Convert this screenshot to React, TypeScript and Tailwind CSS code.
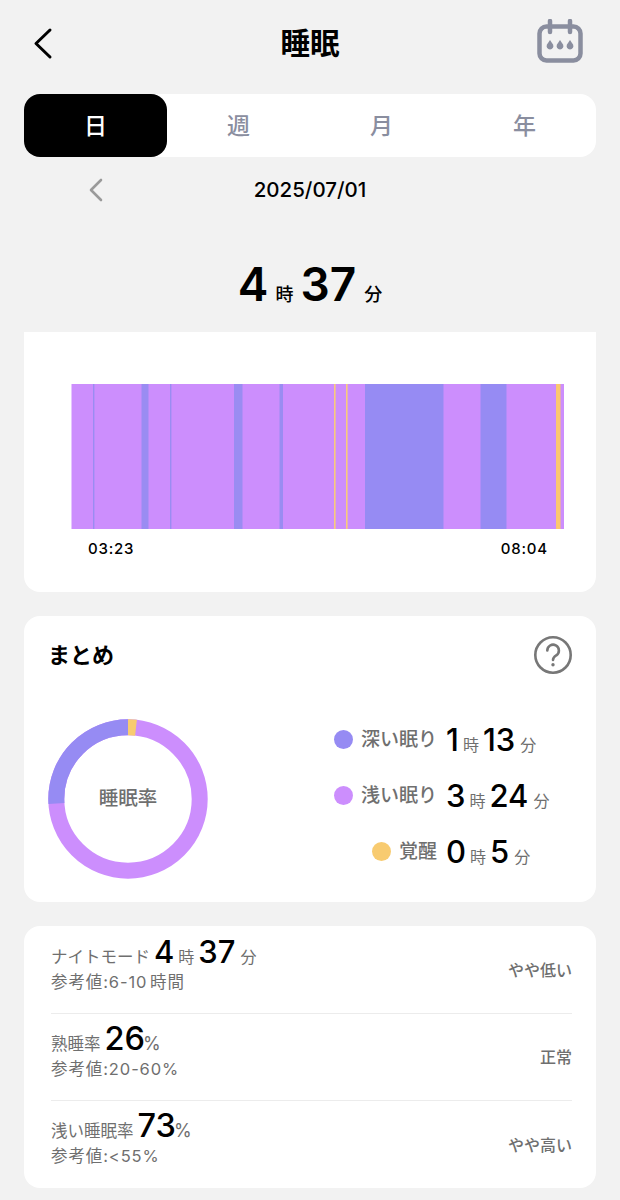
const stages = [
  { x: 93, w: 1.4, color: "#9a8cf2" },
  { x: 141.5, w: 7, color: "#9a8cf2" },
  { x: 170, w: 1.4, color: "#9a8cf2" },
  { x: 234, w: 8.5, color: "#9a8cf2" },
  { x: 279.5, w: 3.5, color: "#9a8cf2" },
  { x: 334, w: 1.6, color: "#f8cb7c" },
  { x: 346, w: 1.6, color: "#f8cb7c" },
  { x: 365, w: 78.5, color: "#968bf3" },
  { x: 480.5, w: 26, color: "#968bf3" },
  { x: 556, w: 4.5, color: "#fbc76f" },
];

const Unit = ({ children, className = "" }: { children: string; className?: string }) => (
  <span className={`text-[16px] font-normal text-[#6f6f6f] ${className}`}>{children}</span>
);

const Duration = ({ h, m }: { h: string; m: string }) => (
  <span className="flex items-baseline text-[31px] leading-none font-medium text-black">
    <span>{h}</span>
    <Unit className="ml-[4px] mr-[4px]">時</Unit>
    <span>{m}</span>
    <Unit className="ml-[5px]">分</Unit>
  </span>
);

const Legend = ({ color, label, h, m }: { color: string; label: string; h: string; m: string }) => (
  <>
    <div className="flex items-center justify-end gap-[8px]">
      <span className="size-[19px] rounded-full" style={{ backgroundColor: color }} />
      <span className="text-[19px] leading-none font-medium text-[#6f6f6f]">{label}</span>
    </div>
    <Duration h={h} m={m} />
  </>
);

const Metric = ({
  label,
  value,
  reference,
  status,
  last,
}: {
  label: string;
  value: React.ReactNode;
  reference: React.ReactNode;
  status: string;
  last?: boolean;
}) => (
  <div className={`flex h-[87px] items-center justify-between ${last ? "" : "border-b border-[#ececec]"}`}>
    <div className="pb-[12px]">
      <div className="flex h-[34px] items-baseline gap-[4px] text-[16.5px] text-[#6f6f6f]">
        <span>{label}</span>
        {value}
      </div>
      <div className="mt-[1px] text-[16.5px] leading-[22px] tracking-[0.9px] text-[#6f6f6f]">{reference}</div>
    </div>
    <span className="text-[16px] font-medium text-[#6f6f6f]">{status}</span>
  </div>
);

const Percent = ({ value }: { value: string }) => (
  <span className="flex items-baseline text-[32.5px] leading-none font-medium text-black">
    {value}
    <span className="-ml-[2px] text-[18px] font-normal text-[#6f6f6f]">%</span>
  </span>
);

export default function App() {
  return (
    <div
      className="h-[1200px] w-[620px] overflow-hidden bg-[#f2f2f2]"
      style={{ fontFamily: 'Inter, "Noto Sans CJK JP", sans-serif' }}
    >
      {/* header */}
      <div className="grid h-[94px] grid-cols-[60px_1fr_60px] items-start px-[24px] pt-[20px]">
        <svg width="40" height="46" viewBox="0 0 40 46" fill="none">
          <path d="M26 10 L12 23.5 L26 37" stroke="#000" strokeWidth="3" strokeLinecap="round" strokeLinejoin="round" />
        </svg>
        <h1 className="pt-[3px] text-center text-[29.5px] leading-[40px] font-bold text-black">睡眠</h1>
        <svg width="50" height="50" viewBox="0 0 50 50" fill="none" className="-ml-[1px] -mt-[1px]">
          <rect x="4.5" y="7.5" width="41" height="34" rx="7" stroke="#8a8e9f" strokeWidth="4.5" />
          <path d="M15 2v11M35 2v11" stroke="#8a8e9f" strokeWidth="4.5" strokeLinecap="round" />
          <path d="M15 21l3 4.5a3.4 3.4 0 1 1-6 0z" fill="#8a8e9f" />
          <path d="M25 21l3 4.5a3.4 3.4 0 1 1-6 0z" fill="#8a8e9f" />
          <path d="M35 21l3 4.5a3.4 3.4 0 1 1-6 0z" fill="#8a8e9f" />
        </svg>
      </div>

      {/* period tabs */}
      <div className="mx-[24px] grid h-[63px] grid-cols-4 rounded-[16px] bg-white text-[23px] font-medium text-[#8a8e9f]">
        <div className="flex items-center justify-center rounded-[16px] bg-black pt-[1px] text-white">日</div>
        <div className="flex items-center justify-center pt-[1px]">週</div>
        <div className="flex items-center justify-center pt-[1px]">月</div>
        <div className="flex items-center justify-center pt-[1px]">年</div>
      </div>

      {/* date */}
      <div className="relative mt-[15px] flex h-[36px] items-center justify-center text-[20.5px] font-medium text-black">
        <svg width="18" height="28" viewBox="0 0 18 28" fill="none" className="absolute left-[87px] top-[4px]">
          <path d="M14 4 L4 14 L14 24" stroke="#9a9a9a" strokeWidth="2.6" strokeLinecap="round" strokeLinejoin="round" />
        </svg>
        2025/07/01
      </div>

      {/* total */}
      <div className="mt-[44px] flex h-[65px] items-baseline justify-center text-[46px] leading-[65px] font-semibold text-black">
        <span>4</span>
        <span className="mx-[7px] text-[18px] font-medium">時</span>
        <span>37</span>
        <span className="ml-[8px] text-[18px] font-medium">分</span>
      </div>

      {/* stage chart */}
      <div className="mx-[24px] mt-[15px] h-[260px] rounded-b-[16px] bg-white pt-[52px]">
        <svg width="572" height="145" viewBox="24 384 572 145" className="block">
          <rect x="71.5" y="384" width="492.5" height="145" fill="#cc8efd" />
          {stages.map((s) => (
            <rect key={s.x} x={s.x} y="384" width={s.w} height="145" fill={s.color} />
          ))}
        </svg>
        <div className="mt-[10px] flex justify-between pl-[64px] pr-[48px] text-[15px] leading-[20px] font-medium tracking-[0.8px] text-black">
          <span>03:23</span>
          <span>08:04</span>
        </div>
      </div>

      {/* summary */}
      <div className="mx-[24px] mt-[24px] h-[286px] rounded-[16px] bg-white px-[24px] pt-[19px]">
        <div className="flex items-center justify-between">
          <h2 className="text-[22px] leading-[40px] font-bold text-black">まとめ</h2>
          <svg width="40" height="40" viewBox="0 0 40 40" fill="none" className="-mr-[1px]">
            <circle cx="20" cy="20" r="17.7" stroke="#777" strokeWidth="2.6" />
            <path
              d="M14.3 15.5a5.8 5.8 0 1 1 9 4.8c-2 1.4-3.3 2.4-3.3 4.6"
              stroke="#777"
              strokeWidth="2.6"
              strokeLinecap="round"
            />
            <circle cx="20" cy="29.7" r="1.7" fill="#777" />
          </svg>
        </div>
        <div className="mt-[44px] flex items-start justify-between">
          <div className="relative size-[160px]">
            <svg width="160" height="160" viewBox="0 0 160 160" className="-rotate-90">
              <circle cx="80" cy="80" r="71.7" fill="none" stroke="#cc8efd" strokeWidth="16" />
              <circle cx="80" cy="80" r="71.7" fill="none" stroke="#968bf3" strokeWidth="16" pathLength={100} strokeDasharray="26 74" strokeDashoffset="-74" />
              <circle cx="80" cy="80" r="71.7" fill="none" stroke="#f8cb70" strokeWidth="16" pathLength={100} strokeDasharray="1.8 98.2" />
            </svg>
            <span className="absolute inset-0 flex items-center justify-center text-[19.5px] font-medium text-[#6f6f6f]">
              睡眠率
            </span>
          </div>
          <div className="mr-[-12px] grid w-[260px] grid-cols-[113px_1fr] items-center gap-x-[9px] gap-y-[25px] pt-[5px]">
            <Legend color="#968bf3" label="深い眠り" h="1" m="13" />
            <Legend color="#cc8efd" label="浅い眠り" h="3" m="24" />
            <Legend color="#f8cb70" label="覚醒" h="0" m="5" />
          </div>
        </div>
      </div>

      {/* metrics */}
      <div className="mx-[24px] mt-[24px] h-[262px] rounded-[16px] bg-white px-[27px] pr-[24px] pt-[1px]">
        <Metric
          label="ナイトモード"
          value={<Duration h="4" m="37" />}
          reference={
            <>
              参考値:6-10<span className="tracking-[-2px]"> </span>時間
            </>
          }
          status="やや低い"
        />
        <Metric label="熟睡率" value={<Percent value="26" />} reference="参考値:20-60%" status="正常" />
        <Metric label="浅い睡眠率" value={<Percent value="73" />} reference="参考値:<55%" status="やや高い" last />
      </div>
    </div>
  );
}
